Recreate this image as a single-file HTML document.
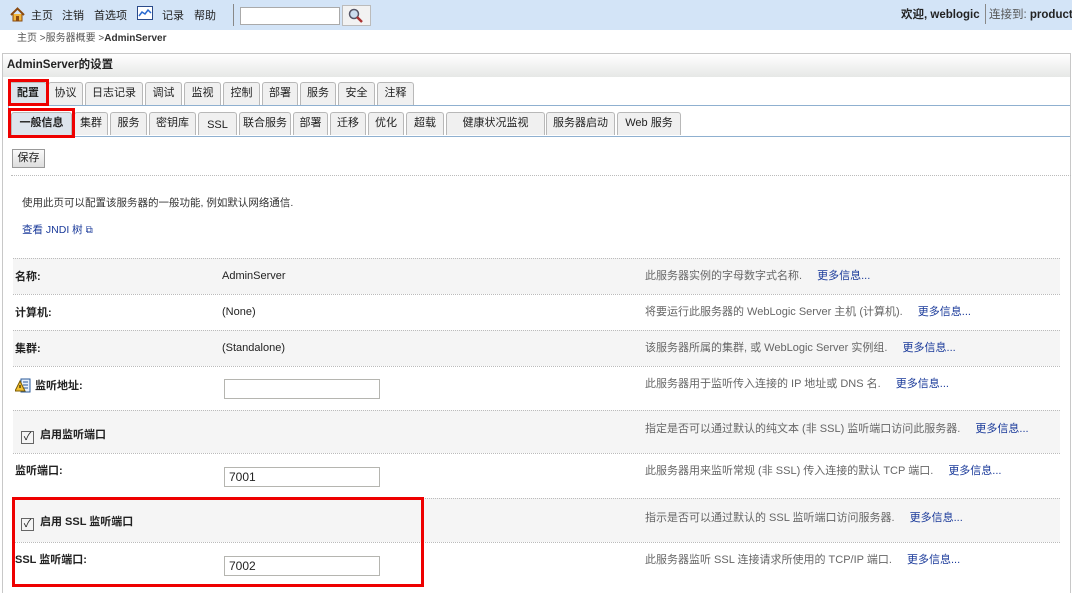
<!DOCTYPE html>
<html><head><meta charset="utf-8"><style>
*{margin:0;padding:0;box-sizing:border-box}
body{width:1072px;height:587px;overflow:hidden;background:#fff;font-family:"Liberation Sans","Noto Sans CJK SC",sans-serif;font-size:11px;line-height:14px;color:#222;position:relative}
.a{position:absolute;white-space:nowrap}
#top{position:absolute;left:0;top:0;width:1072px;height:30px;background:#d3e4f7}
.tab{position:absolute;height:23px;border:1px solid #b8b8b8;border-bottom:none;border-radius:3px 3px 0 0;background:#f0f0f0;text-align:center;line-height:20px;font-size:11px;color:#222}
.row{position:absolute;left:13px;width:1047px;border-top:1px dotted #bbb}
.g{background:#f5f5f5}
.lbl{position:absolute;left:2px;font-weight:bold;font-size:11px;line-height:14px}
.val{position:absolute;left:209px;font-size:11px;line-height:14px}
.desc{position:absolute;left:632px;color:#666;font-size:11px;line-height:14px}
.more{color:#1a3a9a;margin-left:12px}
.inp{position:absolute;left:211px;width:156px;height:20px;border:1px solid #b5b5b0;background:#fff;font-size:12px;padding-left:4px;line-height:18px}
.cb{display:inline-block;width:13px;height:13px;border:1px solid #666;vertical-align:-2px;margin-right:6px;font-size:11px;line-height:11px;text-align:center;font-weight:normal}
.red{position:absolute;border:3px solid #e00}
</style></head><body>
<div id="top"></div>
<svg class="a" style="left:10px;top:7px" width="15" height="15" viewBox="0 0 15 15"><path d="M1 8L7.5 1.5 14 8" fill="none" stroke="#8a4a10" stroke-width="2"/><path d="M3 7v7h9V7" fill="#f3b63c" stroke="#8a4a10"/><rect x="6" y="9" width="3" height="5" fill="#8a4a10"/></svg>
<div class="a" style="left:31px;top:9px">主页</div>
<div class="a" style="left:62px;top:9px">注销</div>
<div class="a" style="left:94px;top:9px">首选项</div>
<svg class="a" style="left:137px;top:6px" width="16" height="15"><rect x="0.5" y="0.5" width="15" height="13" fill="#fff" stroke="#2a4a8a"/><path d="M2 10l3-4 3 2 3-4 3 3" fill="none" stroke="#2a6ad0" stroke-width="1.5"/></svg>
<div class="a" style="left:162px;top:9px">记录</div>
<div class="a" style="left:194px;top:9px">帮助</div>
<div class="a" style="left:233px;top:4px;width:1px;height:22px;background:#888"></div>
<div class="a" style="left:240px;top:7px;width:100px;height:18px;background:#fff;border:1px solid #aaa"></div>
<div class="a" style="left:342px;top:5px;width:29px;height:21px;background:#f2f2f2;border:1px solid #bbb"></div>
<svg class="a" style="left:348px;top:8px" width="15" height="15"><circle cx="6" cy="6" r="4.5" fill="#cde" stroke="#556" stroke-width="1.5"/><path d="M9 9l5 5" stroke="#a33" stroke-width="2.5"/></svg>
<div class="a" style="left:901px;top:8px;font-weight:bold;font-size:11.5px">欢迎, weblogic</div>
<div class="a" style="left:985px;top:4px;width:1px;height:20px;background:#888"></div>
<div class="a" style="left:989px;top:8px;font-size:11.5px"><span style="color:#555">连接到: </span><b>product</b></div>
<div class="a" style="left:17px;top:32px;font-size:10px;color:#555">主页 &gt;服务器概要 &gt;<b style="color:#333">AdminServer</b></div>
<div class="a" style="left:2px;top:53px;width:1069px;height:540px;border:1px solid #c8c8c8;border-bottom:none"></div>
<div class="a" style="left:3px;top:54px;width:1067px;height:23px;background:linear-gradient(#fff,#e6e8e6)"></div>
<div class="a" style="left:7px;top:58px;font-weight:bold;font-size:11.5px">AdminServer的设置</div>
<div class="tab" style="left:9px;top:82px;width:38px;font-weight:bold;background:#dde4ec">配置</div>
<div class="tab" style="left:48px;top:82px;width:35px">协议</div>
<div class="tab" style="left:85px;top:82px;width:58px">日志记录</div>
<div class="tab" style="left:145px;top:82px;width:37px">调试</div>
<div class="tab" style="left:184px;top:82px;width:37px">监视</div>
<div class="tab" style="left:223px;top:82px;width:37px">控制</div>
<div class="tab" style="left:262px;top:82px;width:36px">部署</div>
<div class="tab" style="left:300px;top:82px;width:36px">服务</div>
<div class="tab" style="left:338px;top:82px;width:37px">安全</div>
<div class="tab" style="left:377px;top:82px;width:37px">注释</div>
<div class="a" style="left:8px;top:105px;width:1062px;height:1px;background:#8fb0d0"></div>
<div class="a" style="left:8px;top:105px;width:1px;height:32px;background:#8fb0d0"></div>
<div class="a" style="left:8px;top:136px;width:1062px;height:1px;background:#8fb0d0"></div>
<div class="tab" style="left:11px;top:112px;width:61px;font-weight:bold;background:#dde4ec">一般信息</div>
<div class="tab" style="left:74px;top:112px;width:34px">集群</div>
<div class="tab" style="left:110px;top:112px;width:37px">服务</div>
<div class="tab" style="left:149px;top:112px;width:47px">密钥库</div>
<div class="tab" style="left:198px;top:112px;width:39px;line-height:25px">SSL</div>
<div class="tab" style="left:239px;top:112px;width:52px">联合服务</div>
<div class="tab" style="left:293px;top:112px;width:35px">部署</div>
<div class="tab" style="left:330px;top:112px;width:36px">迁移</div>
<div class="tab" style="left:368px;top:112px;width:36px">优化</div>
<div class="tab" style="left:406px;top:112px;width:38px">超载</div>
<div class="tab" style="left:446px;top:112px;width:99px">健康状况监视</div>
<div class="tab" style="left:546px;top:112px;width:69px">服务器启动</div>
<div class="tab" style="left:617px;top:112px;width:64px">Web 服务</div>
<div class="red" style="left:8px;top:79px;width:41px;height:27px"></div>
<div class="red" style="left:8px;top:108px;width:67px;height:30px"></div>
<div class="a" style="left:12px;top:149px;width:33px;height:19px;border:1px solid #999;background:linear-gradient(#fafafa,#ddd);text-align:center;line-height:16px;font-size:11px">保存</div>
<div class="a" style="left:11px;top:175px;width:1060px;border-top:1px dotted #bbb"></div>
<div class="a" style="left:22px;top:196px;font-size:10.5px;color:#333">使用此页可以配置该服务器的一般功能, 例如默认网络通信.</div>
<div class="a" style="left:22px;top:223px;font-size:10.5px;color:#1a3a9a">查看 JNDI 树 <span style="font-size:10px">⧉</span></div>

<div class="row g" style="top:258px;height:36px"><span class="lbl" style="top:11px">名称:</span><span class="val" style="top:10px">AdminServer</span><span class="desc" style="top:10px">此服务器实例的字母数字式名称. <span class="more">更多信息...</span></span></div>
<div class="row" style="top:294px;height:36px"><span class="lbl" style="top:11px">计算机:</span><span class="val" style="top:10px">(None)</span><span class="desc" style="top:10px">将要运行此服务器的 WebLogic Server 主机 (计算机). <span class="more">更多信息...</span></span></div>
<div class="row g" style="top:330px;height:36px"><span class="lbl" style="top:11px">集群:</span><span class="val" style="top:10px">(Standalone)</span><span class="desc" style="top:10px">该服务器所属的集群, 或 WebLogic Server 实例组. <span class="more">更多信息...</span></span></div>
<div class="row" style="top:366px;height:44px"><svg style="position:absolute;left:2px;top:11px" width="17" height="16"><rect x="6" y="1" width="9" height="13" fill="#e8f0fa" stroke="#2a5a9a"/><path d="M8 4h5M8 7h5M8 10h5" stroke="#2a5a9a"/><path d="M5 3L0 13h10z" fill="#f3c030" stroke="#7a5a00"/><path d="M5 7v3" stroke="#000"/></svg><span class="lbl" style="left:22px;top:12px">监听地址:</span><div class="inp" style="top:12px"></div><span class="desc" style="top:10px">此服务器用于监听传入连接的 IP 地址或 DNS 名. <span class="more">更多信息...</span></span></div>
<div class="row g" style="top:410px;height:43px"><span class="lbl" style="left:8px;top:17px"><span class="cb">✓</span>启用监听端口</span><span class="desc" style="top:11px">指定是否可以通过默认的纯文本 (非 SSL) 监听端口访问此服务器. <span class="more">更多信息...</span></span></div>
<div class="row" style="top:453px;height:45px"><span class="lbl" style="top:10px">监听端口:</span><div class="inp" style="top:13px">7001</div><span class="desc" style="top:10px">此服务器用来监听常规 (非 SSL) 传入连接的默认 TCP 端口. <span class="more">更多信息...</span></span></div>
<div class="row g" style="top:498px;height:44px"><span class="lbl" style="left:8px;top:16px"><span class="cb">✓</span>启用 SSL 监听端口</span><span class="desc" style="top:12px">指示是否可以通过默认的 SSL 监听端口访问服务器. <span class="more">更多信息...</span></span></div>
<div class="row" style="top:542px;height:45px"><span class="lbl" style="left:2px;top:10px">SSL 监听端口:</span><div class="inp" style="top:13px">7002</div><span class="desc" style="top:10px">此服务器监听 SSL 连接请求所使用的 TCP/IP 端口. <span class="more">更多信息...</span></span></div>
<div class="red" style="left:12px;top:497px;width:412px;height:90px"></div>
</body></html>
